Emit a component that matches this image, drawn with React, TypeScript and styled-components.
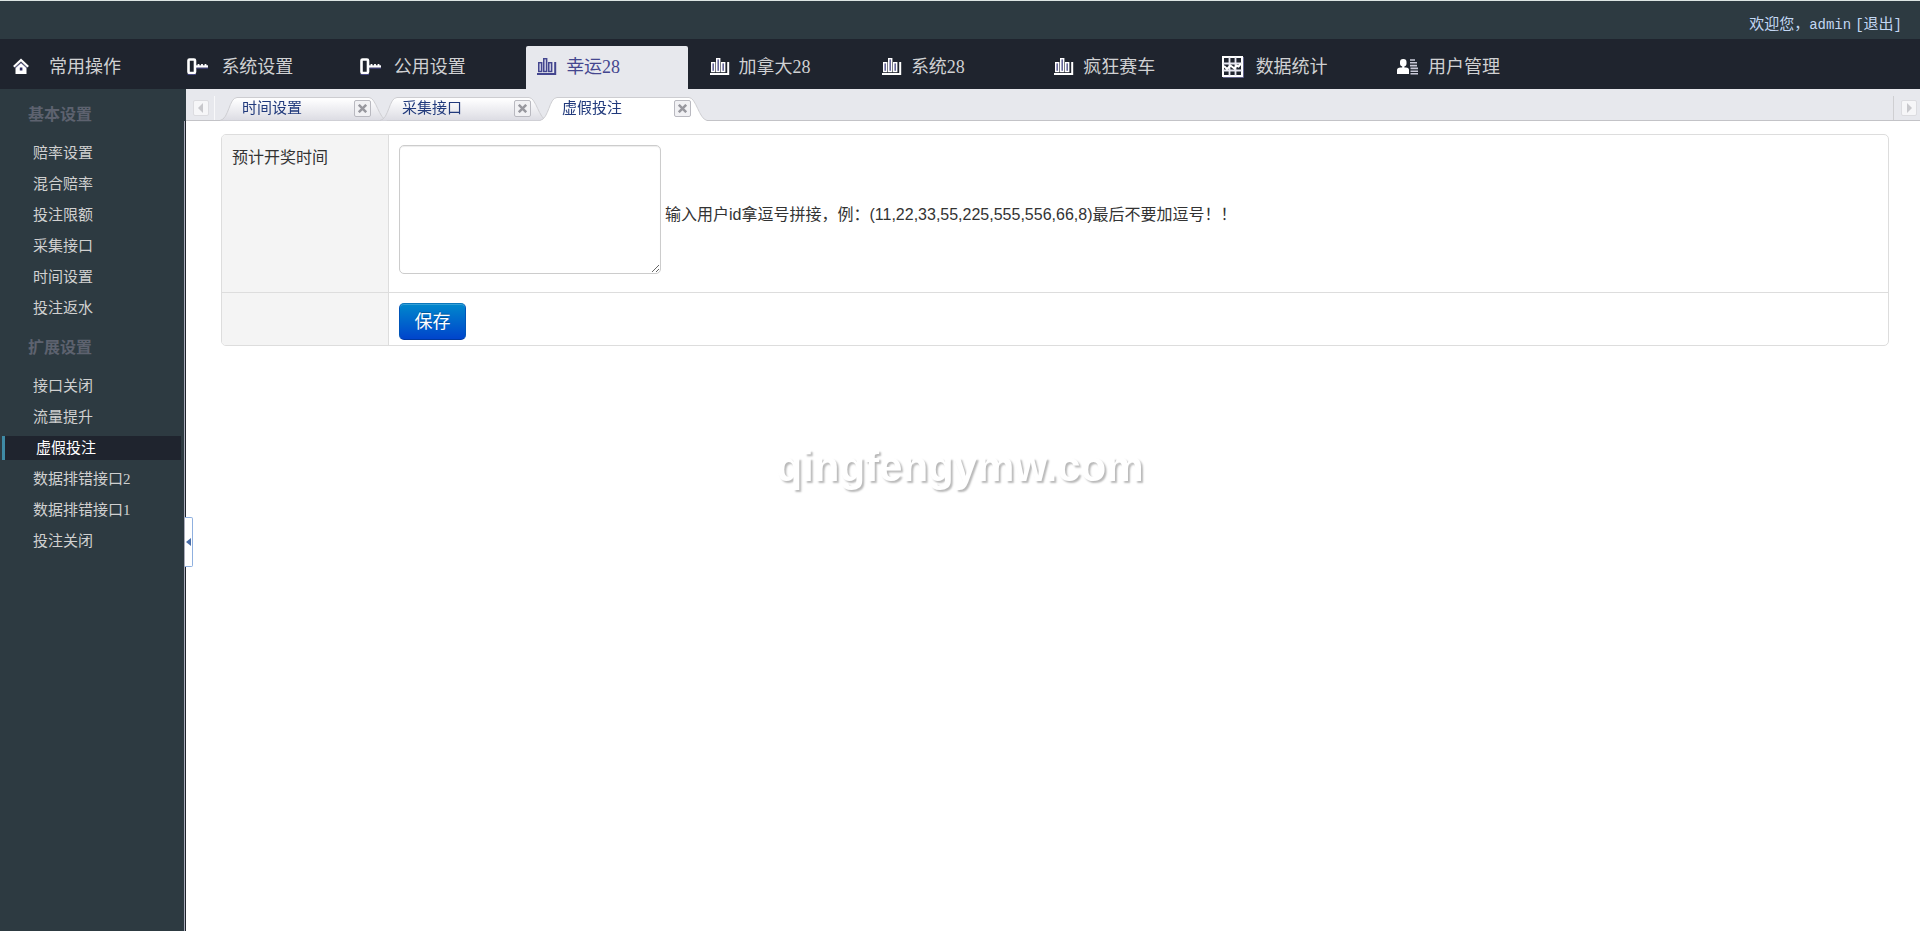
import React from "react";
import styled, { createGlobalStyle, css } from "styled-components";

const song = `"Liberation Serif", "Noto Sans CJK SC", serif`;
const sans = `"Liberation Sans", "Noto Sans CJK SC", sans-serif`;

const GlobalStyle = createGlobalStyle`
  *, *::before, *::after { box-sizing: border-box; }
  body { margin: 0; background: #fff; font-family: ${song}; font-size: 15px; color: #333; }
  a { color: inherit; text-decoration: none; }
  ul { list-style: none; margin: 0; padding: 0; }
  button { padding: 0; border: 0; background: none; cursor: pointer; }
`;

const Page = styled.div`
  min-height: 100vh;
  display: flex;
  flex-direction: column;
`;

const TopBar = styled.header`
  height: 39px;
  border-top: 1px solid #dde5e3;
  background: #2d3a41;
  color: #c3d7f3;
  display: flex;
  align-items: center;
  justify-content: flex-end;
  gap: 4px;
  padding: 4px 18px 0 0;
`;

const Latin = styled.span`
  font-family: "Liberation Mono", monospace;
  font-size: 14px;
`;

const MainNav = styled.nav`
  height: 50px;
  background: #1f242e;
  padding: 7px 9px 0;
`;

const NavList = styled.ul`
  height: 100%;
  max-width: 1541px;
  display: flex;
  justify-content: space-between;
`;

const NavItem = styled.li`
  flex: 0 0 162px;
  display: flex;
`;

const NavLink = styled.a<{ $active?: boolean }>`
  flex: 1;
  display: flex;
  align-items: center;
  padding-bottom: 5px;
  border-radius: 2px 2px 0 0;
  font-size: 18px;
  color: #d0d1d3;
  white-space: nowrap;
  ${(p) =>
    p.$active &&
    css`
      background: #e7e8ed;
      color: #44468f;
    `}
`;

const NavIcon = styled.span<{ $shift: number }>`
  flex: 0 0 40px;
  padding: 3px 0 0 ${(p) => p.$shift}px;
  display: flex;
`;

const Columns = styled.div`
  flex: 1;
  display: grid;
  grid-template-columns: 184px minmax(0, 1fr);
`;

const Sidebar = styled.aside`
  background: #2d3a41;
  padding: 14px 3px 0 2px;
`;

const GroupTitle = styled.h2`
  margin: 0;
  padding-left: 26px;
  height: 24px;
  line-height: 24px;
  font-size: 16px;
  font-weight: bold;
  color: #5d626f;
`;

const GroupList = styled.ul`
  display: flex;
  flex-direction: column;
  gap: 7px;
  padding: 14px 0 16px;
`;

const SideLink = styled.a<{ $active?: boolean }>`
  display: block;
  height: 24px;
  line-height: 24px;
  padding-left: 31px;
  color: #d0d0d0;
  ${(p) =>
    p.$active &&
    css`
      border-left: 3px solid #3f8aa5;
      background: #1f242e;
      color: #fff;
    `}
`;

const Main = styled.main`
  display: flex;
  flex-direction: column;
`;

const TabBar = styled.div`
  height: 32px;
  border-left: 2px solid #2d3a41;
  background: linear-gradient(#e7e8ed, #e7e8ed) top / 100% 31px no-repeat #c3c3c7;
  display: flex;
  align-items: flex-end;
`;

const TabScroller = styled.div<{ $end?: boolean }>`
  height: 24px;
  width: ${(p) => (p.$end ? 27 : 29)}px;
  padding: 4px 0 0 7px;
  margin-bottom: 1px;
  border: 0 solid #f8f8fa;
  border-right-width: ${(p) => (p.$end ? 0 : 1)}px;
  ${(p) =>
    p.$end &&
    css`
      margin-left: auto;
      border-left: 1px solid #cfcfd2;
    `}
`;

const ScrollButton = styled.button`
  width: 16px;
  height: 16px;
  border: 1px solid #dcdce0;
  border-radius: 2px;
  background: #f6f6f8;
  display: grid;
  place-items: center;
`;

const Tabs = styled.ul`
  display: flex;
  margin-left: 5px;
`;

const Tab = styled.li<{ $active?: boolean }>`
  position: relative;
  z-index: ${(p) => (p.$active ? 2 : 1)};
  width: 167px;
  height: 24px;
  margin-right: -7px;
  padding: 0 16px 0 22px;
  display: flex;
  align-items: center;
  justify-content: space-between;
  color: #213a7c;
`;

const TabShape = styled.svg`
  position: absolute;
  inset: 0;
  z-index: -1;
`;

const TabLink = styled.a`
  line-height: 20px;
  padding-bottom: 2px;
`;

const CloseButton = styled.button`
  width: 17px;
  height: 17px;
  margin-bottom: 2px;
  border: 1px solid #b9b9c0;
  border-radius: 2px;
  background: #f1f1f4;
  display: grid;
  place-items: center;
`;

const Workspace = styled.div`
  position: relative;
  flex: 1;
  border-left: 1px solid #a9abb9;
`;

const Frame = styled.div`
  height: 100%;
  border-left: 1px solid #20242c;
  padding: 13px 31px 0 35px;
`;

const Handle = styled.button`
  position: absolute;
  left: 0;
  top: calc(50% - 9px);
  width: 8px;
  height: 50px;
  border: 1px solid #8fb0df;
  border-left: 0;
  border-radius: 0 2px 2px 0;
  background: #fff;
  display: grid;
  place-items: center;
`;

const FormTable = styled.table`
  width: 100%;
  border: 1px solid #ddd;
  border-radius: 5px;
  border-spacing: 0;
  overflow: hidden;
  font-family: ${sans};
  font-size: 16px;
  tr + tr > * {
    border-top: 1px solid #ddd;
  }
`;

const HeadCell = styled.th`
  width: 167px;
  padding: 10px;
  background: #f4f4f4;
  border-right: 1px solid #ddd;
  text-align: left;
  vertical-align: top;
  font-weight: normal;
  line-height: 26px;
  & > label {
    display: block;
  }
`;

const FieldCell = styled.td`
  padding: 10px 10px 5px;
`;

const Field = styled.div`
  display: flex;
  align-items: center;
  gap: 4px;
`;

const TextArea = styled.textarea`
  width: 262px;
  height: 129px;
  margin-bottom: 13px;
  padding: 5px 8px;
  border: 1px solid #ccc;
  border-radius: 5px;
  box-shadow: inset 0 1px 1px rgba(0, 0, 0, 0.075);
  font: inherit;
`;

const Hint = styled.label`
  line-height: 24px;
  padding-bottom: 2px;
`;

const SaveButton = styled.button`
  display: block;
  width: 67px;
  height: 37px;
  border: 1px solid #0055b8;
  border-color: #0a78bd #0055b8 #0038a0;
  border-radius: 5px;
  background: linear-gradient(#0088cc, #0044cc);
  box-shadow: inset 0 1px 0 rgba(255, 255, 255, 0.2);
  color: #fff;
  text-shadow: 0 -1px 0 rgba(0, 0, 0, 0.25);
  font-family: ${sans};
  font-size: 18px;
  line-height: 24px;
`;

const Watermark = styled.div`
  position: fixed;
  inset: 0;
  padding-top: 2px;
  display: grid;
  place-items: center;
  pointer-events: none;
  font-family: "Liberation Sans", sans-serif;
  font-size: 42px;
  font-weight: bold;
  color: #fff;
  text-shadow: 2px 2px 2px rgba(0, 0, 0, 0.28);
`;

const HomeIcon = () => (
  <svg width="16" height="17" viewBox="0 0 16 17" fill="none">
    <path d="M2.500 9.500 8 4.500l5.500 5V16h-11z" fill="#fff" />
    <path d="M.8 8.800 8 2l7.200 6.800" stroke="#fff" strokeWidth="2.200" />
    <path d="M2.200 10 8 4.800l5.800 5.200" stroke="#4a4a85" strokeWidth="0.800" />
    <rect x="6.800" y="9.500" width="2.600" height="3" fill="#2b2b60" />
  </svg>
);

const KeyIcon = () => (
  <svg width="21" height="17" viewBox="0 0 21 17" fill="none">
    <rect x="1.500" y="1.500" width="6.500" height="13.500" rx="1" stroke="#fff" strokeWidth="2.600" />
    <path d="M8 8.500h13" stroke="#fff" strokeWidth="2.400" />
    <path d="M11.500 6v2M15 6v2M18.500 6v2" stroke="#fff" strokeWidth="1.800" />
    <path d="M9.500 10.200H21M.5 16.600h8.500" stroke="#4a4a95" strokeWidth="0.800" />
  </svg>
);

const ChartIcon = ({ active }: { active?: boolean }) => {
  const line = active ? "#44468f" : "#fff";
  const fill = active ? "#c4c5de" : "#66679a";
  return (
    <svg width="20" height="20" viewBox="0 0 20 20" fill="none">
      <path d="M0 17h18.200V5" stroke={line} strokeWidth="2" />
      <g fill={fill} stroke={line} strokeWidth="1.400">
        <rect x="1.700" y="5.700" width="3" height="8.800" />
        <rect x="6.700" y="1.700" width="3" height="12.800" />
        <rect x="11.700" y="5.700" width="3" height="8.800" />
      </g>
    </svg>
  );
};

const GridIcon = () => (
  <svg width="22" height="22" viewBox="0 0 22 22" fill="none">
    <rect x="1" y="1" width="19" height="19" stroke="#fff" strokeWidth="2" />
    <path d="M7.500 1v19M13.500 1v19M1 7.500h19M1 14.500h19" stroke="#e8e8f2" strokeWidth="1.800" />
    <path d="m2 10 3 3 3.500-3.500 4 3 2-3 2 1 2.500-3" stroke="#fff" strokeWidth="2" />
    <path d="M1 21.500h20.500V1" stroke="#62638c" strokeWidth="1" />
  </svg>
);

const UserIcon = () => (
  <svg width="21" height="17" viewBox="0 0 21 17" fill="#fff">
    <rect x="3" y="1" width="6.500" height="7.500" rx="3" />
    <path d="M0 16v-4Q0 9.500 3.500 9.500h5.500q3 0 3 2.500v4z" />
    <path d="M5.200 7h2.200v3H5.200z" />
    <path
      d="M13 2h5M13 4.800h7M13 7.600h7M13.500 10.400H21M13.500 13.200H21M13.500 15.800H21"
      stroke="#c9c9d8"
      strokeWidth="1.600"
    />
  </svg>
);

const navItems = [
  { text: "常用操作", icon: <HomeIcon />, shift: 4 },
  { text: "系统设置", icon: <KeyIcon />, shift: 6 },
  { text: "公用设置", icon: <KeyIcon />, shift: 6 },
  { text: "幸运28", icon: <ChartIcon active />, shift: 11, active: true },
  { text: "加拿大28", icon: <ChartIcon />, shift: 11 },
  { text: "系统28", icon: <ChartIcon />, shift: 11 },
  { text: "疯狂赛车", icon: <ChartIcon />, shift: 11 },
  { text: "数据统计", icon: <GridIcon />, shift: 6 },
  { text: "用户管理", icon: <UserIcon />, shift: 9 },
];

const groups = [
  { title: "基本设置", items: ["赔率设置", "混合赔率", "投注限额", "采集接口", "时间设置", "投注返水"] },
  { title: "扩展设置", items: ["接口关闭", "流量提升", "虚假投注", "数据排错接口2", "数据排错接口1", "投注关闭"] },
];

const tabs = ["时间设置", "采集接口", "虚假投注"];
const current = "虚假投注";

const Arrow = ({ d, color }: { d: string; color: string }) => (
  <svg width="6" height="10" viewBox="0 0 6 10" fill={color}>
    <path d={d} />
  </svg>
);

const tabEdge = "M0 23.500C9 22 9 .5 17 .5H149C156 .5 159 22 167 23.500";

export default function App() {
  return (
    <Page>
      <GlobalStyle />
      <TopBar>
        <span>
          欢迎您，<Latin>admin</Latin>
        </span>
        <a href="#logout">
          <Latin>[</Latin>退出<Latin>]</Latin>
        </a>
      </TopBar>
      <MainNav>
        <NavList>
          {navItems.map((n) => (
            <NavItem key={n.text}>
              <NavLink href="#" $active={n.active}>
                <NavIcon $shift={n.shift}>{n.icon}</NavIcon>
                {n.text}
              </NavLink>
            </NavItem>
          ))}
        </NavList>
      </MainNav>
      <Columns>
        <Sidebar>
          {groups.map((g) => (
            <section key={g.title}>
              <GroupTitle>{g.title}</GroupTitle>
              <GroupList>
                {g.items.map((t) => (
                  <li key={t}>
                    <SideLink href="#" $active={t === current}>
                      {t}
                    </SideLink>
                  </li>
                ))}
              </GroupList>
            </section>
          ))}
        </Sidebar>
        <Main>
          <TabBar>
            <TabScroller>
              <ScrollButton aria-label="向左">
                <Arrow d="M5 0v10L0 5z" color="#c8c8cc" />
              </ScrollButton>
            </TabScroller>
            <Tabs>
              {tabs.map((t) => (
                <Tab key={t} $active={t === current}>
                  <TabShape width="167" height="24" viewBox="0 0 167 24">
                    <defs>
                      <linearGradient id="tabFill" x1="0" y1="0" x2="0" y2="1">
                        <stop offset="0.1" stopColor="#fdfdfe" />
                        <stop offset="1" stopColor="#dcdce3" />
                      </linearGradient>
                    </defs>
                    <path d={t === current ? `${tabEdge}V24H0z` : tabEdge} fill={t === current ? "#fff" : "url(#tabFill)"} />
                    <path d={tabEdge} fill="none" stroke="#cdcdd1" />
                  </TabShape>
                  <TabLink href="#">{t}</TabLink>
                  <CloseButton aria-label="关闭">
                    <svg width="9" height="9" viewBox="0 0 9 9" stroke="#98989f" strokeWidth="2.500">
                      <path d="m.8.8 7.400 7.400M8.200.8.8 8.200" />
                    </svg>
                  </CloseButton>
                </Tab>
              ))}
            </Tabs>
            <TabScroller $end>
              <ScrollButton aria-label="向右">
                <Arrow d="M1 0v10l5-5z" color="#c8c8cc" />
              </ScrollButton>
            </TabScroller>
          </TabBar>
          <Workspace>
            <Frame>
              <FormTable>
                <tbody>
                  <tr>
                    <HeadCell scope="row">
                      <label htmlFor="ids">预计开奖时间</label>
                    </HeadCell>
                    <FieldCell>
                      <Field>
                        <TextArea id="ids" />
                        <Hint htmlFor="ids">
                          输入用户id拿逗号拼接，例：(11,22,33,55,225,555,556,66,8)最后不要加逗号！！
                        </Hint>
                      </Field>
                    </FieldCell>
                  </tr>
                  <tr>
                    <HeadCell />
                    <FieldCell>
                      <SaveButton type="button">保存</SaveButton>
                    </FieldCell>
                  </tr>
                </tbody>
              </FormTable>
            </Frame>
            <Handle aria-label="收起菜单">
              <Arrow d="M5 1v8L0 5z" color="#4a6ea9" />
            </Handle>
          </Workspace>
        </Main>
      </Columns>
      <Watermark>qingfengymw.com</Watermark>
    </Page>
  );
}
